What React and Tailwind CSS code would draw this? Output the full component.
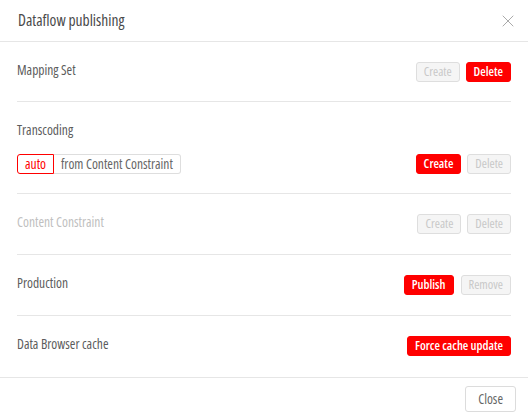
import { X } from 'lucide-react'

function Btn({ children, variant = 'disabled' }) {
  const styles = {
    primary: 'bg-[#ff0000] border-[#ff0000] text-white font-semibold',
    disabled: 'bg-[#f5f5f5] border-[#dedede] text-[#c8c8c8]',
  }
  return (
    <button className={`h-5 px-[7px] rounded-[3px] border text-[12.5px] leading-none ${styles[variant]}`}>
      {children}
    </button>
  )
}

export default function App() {
  return (
    <div className="w-[528px] h-[416px] bg-white flex flex-col font-['Open_Sans',sans-serif] font-stretch-[75%] text-[#5c5c5c]">
      {/* header */}
      <div className="h-[42px] px-[18px] flex items-center justify-between border-b border-[#e6e6e6]">
        <h1 className="text-[15.5px] text-[#4a4a4a]">Dataflow publishing</h1>
        <X size={20} strokeWidth={1} className="text-[#999] mr-[-8px]" />
      </div>

      {/* body */}
      <div className="flex-1 px-[17px] flex flex-col">
        <div className="pt-5 pb-[19px] flex items-start justify-between border-b border-[#e6e6e6]">
          <span className="text-[13.5px] leading-4">Mapping Set</span>
          <div className="flex gap-[6px]">
            <Btn>Create</Btn>
            <Btn variant="primary">Delete</Btn>
          </div>
        </div>

        <div className="pt-5 pb-[19px] flex flex-col border-b border-[#e6e6e6]">
          <span className="text-[13.5px] leading-4">Transcoding</span>
          <div className="mt-4 flex items-center justify-between">
            <div className="flex h-5 text-[13.5px]">
              <span className="px-[7px] flex items-center border border-[#ff0000] rounded-l-[3px] text-[#ff0000]">auto</span>
              <span className="px-[7px] flex items-center border border-l-0 border-[#dedede] rounded-r-[3px] text-[#666]">from Content Constraint</span>
            </div>
            <div className="flex gap-[6px]">
              <Btn variant="primary">Create</Btn>
              <Btn>Delete</Btn>
            </div>
          </div>
        </div>

        <div className="py-5 flex items-start justify-between border-b border-[#e6e6e6]">
          <span className="text-[13.5px] leading-4 text-[#c0c0c0]">Content Constraint</span>
          <div className="flex gap-[6px]">
            <Btn>Create</Btn>
            <Btn>Delete</Btn>
          </div>
        </div>

        <div className="py-5 flex items-start justify-between border-b border-[#e6e6e6]">
          <span className="text-[13.5px] leading-4">Production</span>
          <div className="flex gap-[7px]">
            <Btn variant="primary">Publish</Btn>
            <Btn>Remove</Btn>
          </div>
        </div>

        <div className="pt-5 pb-[21px] flex items-start justify-between">
          <span className="text-[13.5px] leading-4">Data Browser cache</span>
          <Btn variant="primary">Force cache update</Btn>
        </div>
      </div>

      {/* footer */}
      <div className="h-[39px] border-t border-[#e6e6e6] flex justify-end pt-2 pr-3">
        <button className="h-[26px] px-3 rounded-[3px] border border-[#dcdcdc] bg-white text-[13.5px] text-[#666]">
          Close
        </button>
      </div>
    </div>
  )
}
